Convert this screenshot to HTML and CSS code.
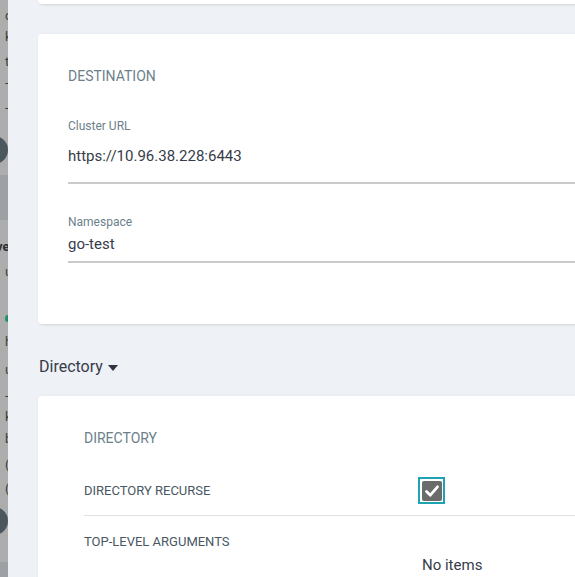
FILE: index.html
```html
<!DOCTYPE html>
<html>
<head>
<meta charset="utf-8">
<link rel="stylesheet" href="styles.css">
</head>
<body>
<div class="page">
  <div class="backdrop">
    <span class="frag" style="top:8px">c</span>
    <span class="frag" style="top:29px">k</span>
    <span class="frag" style="top:54px">t</span>
    <span class="frag" style="top:75px">-</span>
    <span class="frag" style="top:100px">-</span>
    <span class="bd-circle" style="top:136px"></span>
    <span class="bd-band" style="top:175px;height:45px"></span>
    <span class="frag bold" style="top:239px;left:-4px">ve</span>
    <span class="frag" style="top:264px">u</span>
    <span class="bd-dot" style="top:315px"></span>
    <span class="frag" style="top:334px">h</span>
    <span class="frag" style="top:362px">u</span>
    <span class="frag" style="top:388px">-</span>
    <span class="frag" style="top:409px">k</span>
    <span class="frag" style="top:431px">b</span>
    <span class="frag" style="top:457px">(</span>
    <span class="frag" style="top:481px">(</span>
    <span class="bd-circle" style="top:507px"></span>
    <span class="bd-band" style="top:562px;height:20px"></span>
  </div>
  <div class="panel">
    <div class="card card-top"></div>

    <div class="card card-dest">
      <div class="card-title">DESTINATION</div>
      <div class="field field-url">
        <div class="field-label">Cluster URL</div>
        <div class="field-value">https://10.96.38.228:6443</div>
      </div>
      <div class="field field-ns">
        <div class="field-label">Namespace</div>
        <div class="field-value">go-test</div>
      </div>
    </div>

    <div class="section-toggle">Directory <span class="caret"></span></div>

    <div class="card card-dir">
      <div class="card-title">DIRECTORY</div>
      <div class="row row-check">
        <div class="row-label">DIRECTORY RECURSE</div>
        <div class="row-value">
          <span class="checkbox">
            <span class="checkbox-box">
              <svg viewBox="0 0 20 20" width="20" height="20"><path d="M4.5 10.5 L8.3 14.2 L15.5 5.8" fill="none" stroke="#fff" stroke-width="2.8" stroke-linecap="round" stroke-linejoin="round"/></svg>
            </span>
          </span>
        </div>
      </div>
      <div class="row row-args">
        <div class="row-label">TOP-LEVEL ARGUMENTS</div>
        <div class="row-value"><div class="no-items">No items</div></div>
      </div>
    </div>
  </div>
</div>
</body>
</html>
```

FILE: styles.css
```css
html, body {
  margin: 0;
  padding: 0;
}
body {
  width: 575px;
  height: 577px;
  overflow: hidden;
  font-family: Roboto, "Liberation Sans", sans-serif;
  background: #eef1f5;
}
.page {
  display: flex;
  height: 577px;
}
.backdrop {
  position: relative;
  width: 8px;
  flex-shrink: 0;
  background: #adadad;
  overflow: hidden;
}
.frag {
  position: absolute;
  left: 5px;
  font-size: 13px;
  line-height: 16px;
  color: #3c3c3c;
}
.frag.bold {
  font-weight: 700;
  color: #2e2e2e;
}
.bd-circle {
  position: absolute;
  left: -20px;
  width: 28px;
  height: 28px;
  border-radius: 50%;
  background: #4b575f;
}
.bd-band {
  position: absolute;
  left: 0;
  width: 8px;
  background: #9ea1a4;
}
.bd-dot {
  position: absolute;
  left: 5px;
  width: 5px;
  height: 7px;
  border-radius: 50%;
  background: #239266;
}
.panel {
  flex-shrink: 0;
  width: 800px;
  padding-left: 30px;
  background: #eef1f5;
  box-sizing: border-box;
}
.card {
  background: #fff;
  border-radius: 4px;
  box-shadow: 1px 1px 3px rgba(0, 0, 0, 0.12);
}
.card-top {
  height: 40px;
  margin-top: -36px;
}
.card-dest {
  margin-top: 30px;
  height: 290px;
  box-sizing: border-box;
  padding: 32px 0 0 30px;
}
.card-title {
  font-size: 14px;
  line-height: 20px;
  color: #6d7f8b;
}
.field-label {
  font-size: 12px;
  line-height: 16px;
  color: #6d7f8b;
}
.field-value {
  font-size: 15px;
  line-height: 20px;
  color: #363c4a;
  border-bottom: 2px solid #cacaca;
}
.field-url {
  margin-top: 32px;
}
.field-url .field-value {
  margin-top: 12px;
  padding-bottom: 16px;
}
.field-ns {
  margin-top: 30px;
}
.field-ns .field-value {
  margin-top: 4px;
  padding-bottom: 7px;
}
.section-toggle {
  margin-top: 32px;
  margin-left: 1px;
  font-size: 16px;
  line-height: 22px;
  color: #363c4a;
  display: flex;
  align-items: center;
  gap: 5px;
}
.caret {
  width: 0;
  height: 0;
  border-left: 5px solid transparent;
  border-right: 5px solid transparent;
  border-top: 6px solid #2f3540;
  margin-top: 1px;
}
.card-dir {
  margin-top: 18px;
  height: 200px;
  padding: 32px 0 0 46px;
}
.row {
  display: flex;
}
.row-label {
  width: 334px;
  flex-shrink: 0;
  font-size: 13px;
  line-height: 18px;
  color: #495763;
}
.row-check {
  margin-top: 18px;
  align-items: center;
  padding: 11px 0;
  border-bottom: 1px solid #dee1e4;
}
.row-args {
  padding-top: 17px;
  align-items: flex-start;
}
.checkbox {
  display: flex;
  align-items: center;
  justify-content: center;
  width: 27px;
  height: 27px;
  box-sizing: border-box;
  border: 2px solid #1ea3b3;
}
.checkbox-box {
  display: block;
  width: 20px;
  height: 20px;
  border-radius: 2px;
  background: #6b6b6b;
}
.checkbox-box svg {
  display: block;
}
.no-items {
  margin-top: 22px;
  padding-left: 4px;
  font-size: 15px;
  line-height: 20px;
  color: #363c4a;
}
```
